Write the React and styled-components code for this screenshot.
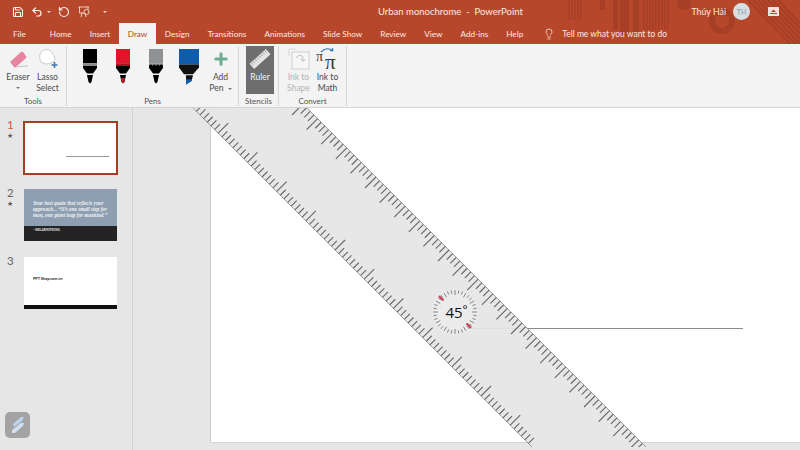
import React from 'react'
import styled, { createGlobalStyle } from 'styled-components'
import { Save, Undo2, RotateCcw, Lightbulb, Plus } from 'lucide-react'

const GlobalStyle = createGlobalStyle`
  html, body {
    margin: 0;
    padding: 0;
    width: 800px;
    height: 450px;
    overflow: hidden;
    background: #e6e6e6;
    font-family: Lato, "Open Sans", "Liberation Sans", sans-serif;
  }
`

const Window = styled.div`
  width: 800px;
  height: 450px;
  display: flex;
  flex-direction: column;
  overflow: hidden;
`

const Header = styled.header`
  position: relative;
  background: #b7472a;
  color: #fbe9e3;
  height: 44px;
  flex: none;
  overflow: hidden;
`

const HeaderArt = styled.svg`
  position: absolute;
  inset: 0;
`

const TitleBar = styled.div`
  position: relative;
  height: 23px;
  display: flex;
  align-items: center;
  font-size: 9.5px;
`

const QuickAccess = styled.div`
  width: 378px;
  flex: none;
  display: flex;
  align-items: center;
  padding-left: 12px;
  box-sizing: border-box;
  color: #fdf1ed;
`

const QatItem = styled.span`
  display: flex;
  align-items: center;
  margin-left: ${p => p.$gap || 0}px;
`

const Caret = styled.span`
  display: inline-block;
  width: 0;
  height: 0;
  border-left: 2px solid transparent;
  border-right: 2px solid transparent;
  border-top: 2px solid ${p => p.$color || '#f5d8cf'};
  margin: ${p => p.$margin || '0'};
`

const DocTitle = styled.div`
  white-space: pre;
`

const UserArea = styled.div`
  margin-left: auto;
  display: flex;
  align-items: center;
  padding-right: 21px;
  font-size: 8.8px;
`

const Avatar = styled.div`
  width: 17px;
  height: 17px;
  border-radius: 50%;
  background: #d8dfe3;
  color: #8b9aa3;
  font-size: 7px;
  display: flex;
  align-items: center;
  justify-content: center;
  margin: 0 18px 0 7px;
`

const TabBar = styled.nav`
  position: relative;
  height: 21px;
  display: flex;
  align-items: stretch;
  padding-left: 4px;
  font-size: 8.2px;
`

const Tab = styled.div`
  padding: 0 ${p => p.$pad || 9}px;
  margin-right: ${p => p.$after || 0}px;
  display: flex;
  align-items: center;
  white-space: nowrap;
  background: ${p => (p.$active ? '#f3f3f3' : 'transparent')};
  color: ${p => (p.$active ? '#b7472a' : 'inherit')};
`

const TellMe = styled.div`
  display: flex;
  align-items: center;
  gap: 7px;
  margin-left: 11px;
  white-space: nowrap;
  font-size: 8.5px;
`

const Ribbon = styled.section`
  height: 64px;
  flex: none;
  box-sizing: border-box;
  background: #f3f3f3;
  border-bottom: 1px solid #d4d4d4;
  display: flex;
  color: #4a4a4a;
  font-size: 8.5px;
  line-height: 11px;
`

const Group = styled.div`
  width: ${p => p.$width}px;
  box-sizing: border-box;
  flex: none;
  display: flex;
  flex-direction: column;
  margin: 2px 0 1px;
  border-right: 1px solid #d6d6d6;
`

const GroupBody = styled.div`
  flex: 1;
  display: flex;
  padding-left: ${p => p.$left || 0}px;
  min-height: 0;
`

const GroupLabel = styled.div`
  text-align: center;
  font-size: 8px;
  line-height: 10px;
  color: #555;
`

const Command = styled.div`
  width: ${p => p.$width}px;
  display: flex;
  flex-direction: column;
  align-items: center;
  text-align: center;
  color: ${p => (p.$disabled ? '#b5b5b5' : 'inherit')};
`

const IconSlot = styled.div`
  height: 26px;
  flex: none;
  display: flex;
  align-items: center;
  justify-content: center;
`

const PenSlot = styled.div`
  width: ${p => p.$width}px;
  padding-top: 3px;
  display: flex;
  justify-content: center;
  flex: none;
`

const RulerButton = styled.div`
  width: 28px;
  height: 48px;
  margin: 0 0 0 7px;
  background: #6e6e6e;
  color: #f4f4f4;
  display: flex;
  flex-direction: column;
  align-items: center;
`

const Main = styled.main`
  position: relative;
  flex: 1;
  display: flex;
  min-height: 0;
`

const SlidePane = styled.aside`
  width: 133px;
  flex: none;
  box-sizing: border-box;
  border-right: 1px solid #d2d2d2;
  background: #e6e6e6;
  display: flex;
  flex-direction: column;
  padding-top: 13px;
`

const SlideRow = styled.div`
  height: ${p => p.$height}px;
  display: flex;
  flex: none;
`

const SlideIndex = styled.div`
  width: 23px;
  padding-left: 7px;
  box-sizing: border-box;
  color: ${p => (p.$active ? '#c4593c' : '#666')};
  font-size: 11.5px;
  line-height: 12px;
  margin-top: -2px;
  flex: none;
`

const Star = styled.div`
  font-size: 7px;
  line-height: 8px;
  color: #555;
`

const Thumb = styled.div`
  width: ${p => (p.$active ? 95 : 93)}px;
  height: ${p => (p.$active ? 54 : 52)}px;
  box-sizing: border-box;
  margin-left: ${p => (p.$active ? 0 : 1)}px;
  background: #fff;
  border: ${p => (p.$active ? '2px solid #a53d24' : 'none')};
  display: flex;
  flex-direction: column;
  overflow: hidden;
`

const ThumbLine = styled.div`
  width: 43px;
  height: 1px;
  background: #999;
  margin: 33px 0 0 41px;
`

const QuoteBlock = styled.div`
  flex: 1;
  background: #8f9fb2;
  color: #eef0f3;
  font-family: "Liberation Serif", serif;
  font-style: italic;
  font-weight: 700;
  font-size: 5.2px;
  line-height: 5.8px;
  padding: 12px 5px 0 9px;
`

const QuoteFooter = styled.div`
  height: 15px;
  background: #242424;
  color: #eee;
  font-size: 2.8px;
  font-weight: 700;
  padding: 2px 0 0 9px;
  box-sizing: border-box;
`

const ThumbBody = styled.div`
  flex: 1;
  font-size: 3.8px;
  font-weight: 700;
  color: #222;
  padding: 19px 0 0 9px;
`

const ThumbFooter = styled.div`
  height: 4px;
  background: #111;
`

const ToggleButton = styled.div`
  width: 25px;
  height: 26px;
  border-radius: 5px;
  background: #a3a3a3;
  margin: auto 0 12px 5px;
  display: flex;
  align-items: center;
  justify-content: center;
`

const Canvas = styled.div`
  flex: 1;
  display: flex;
  padding: 0 0 8px 78px;
`

const Slide = styled.div`
  position: relative;
  flex: 1;
  background: #fff;
  box-shadow: -1px 0 0 #cdcdcd, 0 1px 0 #d4d4d4;
`

const InkLine = styled.div`
  position: absolute;
  left: 259px;
  right: 57px;
  top: 220px;
  height: 1px;
  background: #8c8c8c;
`

const RulerOverlay = styled.svg`
  position: absolute;
  left: 0;
  top: 0;
`

const range = (n, fn) => Array.from({ length: n }, (_, i) => fn(i))

function edgeTicks(offset, sign, every, longLen, shortLen) {
  const out = []
  let i = 0
  for (let y = 104; y < 447; y += 3.65, i++) {
    const x = y + offset
    const len = i % every === 0 ? longLen : shortLen
    out.push(<line key={i} x1={x} y1={y} x2={x + sign * len} y2={y - sign * len} />)
  }
  return out
}

function Ruler() {
  const cx = 455
  const cy = 312
  return (
    <RulerOverlay width="800" height="339" viewBox="0 108 800 339">
      <polygon points="193,108 307,108 646,447 532,447" fill="#e5e5e5" fillOpacity="0.93" />
      <g stroke="#666" strokeWidth="1.1">
        {edgeTicks(199, -1, 4, 11, 6)}
        {edgeTicks(85, 1, 8, 10, 5.5)}
      </g>
      <line x1="193" y1="108" x2="532" y2="447" stroke="#7d7d7d" strokeWidth="0.7" />
      <line x1="307" y1="108" x2="646" y2="447" stroke="#7d7d7d" strokeWidth="0.7" />
      <circle cx={cx} cy={cy} r="23" fill="#ebebeb" />
      <g stroke="#858585" strokeWidth="1">
        {range(36, i => {
          const a = (i * 10 * Math.PI) / 180
          const inner = i % 3 === 0 ? 17 : 18.5
          return (
            <line
              key={i}
              x1={cx + Math.cos(a) * inner}
              y1={cy + Math.sin(a) * inner}
              x2={cx + Math.cos(a) * 22}
              y2={cy + Math.sin(a) * 22}
            />
          )
        })}
      </g>
      <g stroke="#c8394a" strokeWidth="2">
        <line x1={cx - 11.5} y1={cy - 11.5} x2={cx - 16} y2={cy - 16} />
        <line x1={cx + 11.5} y1={cy + 11.5} x2={cx + 16} y2={cy + 16} />
      </g>
      <text x={cx - 1} y={cy + 6} textAnchor="middle" fontSize="15" fill="#111" fontFamily="Open Sans, sans-serif">
        45
      </text>
      <text x={cx + 7.5} y={cy + 2} fontSize="12" fill="#111" fontFamily="Open Sans, sans-serif">
        °
      </text>
    </RulerOverlay>
  )
}

function Pen({ width = 14, body, band, tip, scallop }) {
  const w = width
  const mid = w / 2
  return (
    <svg width={w} height="35" viewBox={`0 0 ${w} 37`} preserveAspectRatio="none">
      <rect x="0" y="0" width={w} height="15" fill={body} />
      <rect x="0" y="15" width={w} height="3" fill={band} />
      <path d={`M0 18 H${w} V20 L${mid + 3} 26 H${mid - 3} L0 20 Z`} fill="#000" />
      {scallop && (
        <path
          d={`M0 18 q2 -3 ${w / 4} 0 q2 -3 ${w / 4} 0 q2 -3 ${w / 4} 0 q2 -3 ${w / 4} 0 Z`}
          fill="#000"
        />
      )}
      <path d={`M${mid - 3} 27.5 H${mid + 3} L${mid + 1.5} 35 L${mid} 36.5 L${mid - 1.5} 35 Z`} fill="#000" />
      {tip && <path d={`M${mid - 2} 31 H${mid + 2} L${mid + 1} 36 H${mid - 1} Z`} fill={tip} />}
    </svg>
  )
}

function BluePen() {
  return (
    <svg width="20" height="36" viewBox="0 0 20 37" preserveAspectRatio="none">
      <rect x="0" y="0" width="20" height="16" fill="#0f5cab" />
      <path d="M0 16 H20 V19 L14 26 H5 L0 19 Z" fill="#111" />
      <path d="M7 27 H14 L12.5 33 L7 36.5 Z" fill="#111" />
      <path d="M7 31 H13 L12.5 33 L7 36.5 Z" fill="#0f5cab" />
    </svg>
  )
}

function EraserIcon() {
  return (
    <svg width="24" height="20" viewBox="0 0 24 20">
      <path d="M4 13 L15 3 Q16 2 17 3 L20 7 Q21 8 20 9 L10 18 Q9 19 8 18 Z" fill="#e884a0" />
      <path d="M11 18 Q16 17 22 17" stroke="#a9b9b6" strokeWidth="0.8" fill="none" />
    </svg>
  )
}

function LassoIcon() {
  return (
    <svg width="22" height="22" viewBox="0 0 22 22">
      <path
        d="M7 2 Q13 0 15 5 Q20 10 16 14 Q10 18 4 14 Q0 6 7 2 Z"
        fill="#fff"
        stroke="#c9c9c9"
        strokeWidth="0.9"
      />
      <path d="M17.5 14 V20 M14.5 17 H20.5" stroke="#3d78b5" strokeWidth="1.6" />
    </svg>
  )
}

function RulerGlyph() {
  return (
    <svg width="22" height="22" viewBox="0 0 22 22">
      <g transform="rotate(-42 11 11)">
        <rect x="0" y="7.5" width="22" height="7" fill="#e4e4e4" />
        <g stroke="#8b8b8b" strokeWidth="0.8">
          {range(8, i => (
            <line key={i} x1={2 + i * 2.6} y1="7.5" x2={2 + i * 2.6} y2="10.5" />
          ))}
        </g>
      </g>
    </svg>
  )
}

function InkShapeIcon() {
  return (
    <svg width="22" height="22" viewBox="0 0 22 22" fill="none">
      <rect x="4" y="4" width="17" height="17" stroke="#cfcfcf" fill="#f7f7f7" />
      <path d="M1 1 H8 M1 1 V8" stroke="#d8d8d8" />
      <path d="M8 10 Q11 5 15 9 L15 13 M12.5 11 L15 13.5 L17.5 11" stroke="#bdbdbd" />
    </svg>
  )
}

function InkMathIcon() {
  return (
    <svg width="24" height="30" viewBox="0 0 24 30">
      <path d="M5 8 Q11 2 17 7 M17 7 L14 6.5 M17 7 L16.5 4" stroke="#2f75b5" fill="none" strokeWidth="1.1" />
      <text x="0" y="17" fontSize="14" fill="#3a3a3a" fontFamily="Liberation Serif, serif">π</text>
      <text x="9" y="25" fontSize="21" fill="#3a3a3a" fontFamily="Liberation Serif, serif">π</text>
    </svg>
  )
}

function HeaderPattern() {
  return (
    <HeaderArt width="800" height="44" viewBox="0 0 800 44">
      <g fill="#a63f25">
        {range(5, i => <rect key={i} x={568 + i * 3} y="0" width="1.5" height="20" />)}
        <rect x="600" y="0" width="5" height="10" />
        <rect x="613" y="0" width="5" height="30" />
        <rect x="620" y="0" width="9" height="36" />
        <rect x="633" y="0" width="6" height="32" />
        {range(9, i => <rect key={i} x={643 + i * 3} y="0" width="1.5" height="30" />)}
        <circle cx="684" cy="3" r="7" />
      </g>
      <circle cx="722" cy="21" r="10" fill="none" stroke="#a63f25" strokeWidth="6" />
      <g stroke="#a63f25" strokeWidth="2">
        {range(7, i => <line key={i} x1={748 + i * 5} y1="0" x2={790 + i * 5} y2="44" />)}
      </g>
    </HeaderArt>
  )
}

function PresentIcon() {
  return (
    <svg width="13" height="12" viewBox="0 0 13 12" fill="none" stroke="#f5dcd4" strokeWidth="0.9">
      <path d="M0.5 1 H11" />
      <path d="M1.5 1 V7 H10 V1" />
      <circle cx="8.5" cy="6" r="2.6" fill="#b7472a" />
      <path d="M4 7 L3 11 M7 7 L8 11" />
    </svg>
  )
}

function DisplayOptions() {
  return (
    <svg width="11" height="9" viewBox="0 0 11 9">
      <rect x="0" y="0" width="11" height="9" rx="0.5" fill="#f6e2dc" />
      <path d="M3 5 L5.5 2.5 L8 5 Z" fill="#b7472a" />
      <rect x="2" y="6" width="7" height="1" fill="#b7472a" />
    </svg>
  )
}

function PenToggleGlyph() {
  return (
    <svg width="16" height="18" viewBox="0 0 16 18">
      <path d="M3 8 L11 1 H14 L12 5 L4 11 Z" fill="#bcd3ec" />
      <path d="M2 14 L11 7 H14 L13 10 L5 17 H2 Z" fill="#cfe0f3" />
    </svg>
  )
}

const tabs = [
  { label: 'File', after: 6 },
  { label: 'Home' },
  { label: 'Insert' },
  { label: 'Draw', active: true, pad: 8.5 },
  { label: 'Design' },
  { label: 'Transitions' },
  { label: 'Animations' },
  { label: 'Slide Show' },
  { label: 'Review' },
  { label: 'View' },
  { label: 'Add-ins' },
  { label: 'Help' },
]

export default function App() {
  return (
    <Window>
      <GlobalStyle />
      <Header>
        <HeaderPattern />
        <TitleBar>
          <QuickAccess>
            <QatItem><Save size={12} strokeWidth={2.2} /></QatItem>
            <QatItem $gap={7}><Undo2 size={12} strokeWidth={2.4} /></QatItem>
            <QatItem $gap={4}><Caret /></QatItem>
            <QatItem $gap={7}><RotateCcw size={12} strokeWidth={2.4} /></QatItem>
            <QatItem $gap={8}><PresentIcon /></QatItem>
            <QatItem $gap={12}><Caret /></QatItem>
          </QuickAccess>
          <DocTitle>Urban monochrome  -  PowerPoint</DocTitle>
          <UserArea>
            Thúy Hải
            <Avatar>TH</Avatar>
            <DisplayOptions />
          </UserArea>
        </TitleBar>
        <TabBar>
          {tabs.map(tab => (
            <Tab key={tab.label} $active={tab.active} $pad={tab.pad} $after={tab.after}>
              {tab.label}
            </Tab>
          ))}
          <TellMe>
            <Lightbulb size={12} strokeWidth={1.5} />
            Tell me what you want to do
          </TellMe>
        </TabBar>
      </Header>

      <Ribbon>
        <Group $width={67}>
          <GroupBody $left={3}>
            <Command $width={30}>
              <IconSlot><EraserIcon /></IconSlot>
              Eraser
              <Caret $color="#777" $margin="4px 0 0" />
            </Command>
            <Command $width={29}>
              <IconSlot><LassoIcon /></IconSlot>
              Lasso
              <br />
              Select
            </Command>
          </GroupBody>
          <GroupLabel>Tools</GroupLabel>
        </Group>

        <Group $width={172}>
          <GroupBody $left={6}>
            <PenSlot $width={33}>
              <Pen body="#000" band="#8a8a8a" />
            </PenSlot>
            <PenSlot $width={33}>
              <Pen body="#e0142b" band="#b01020" tip="#c8182c" />
            </PenSlot>
            <PenSlot $width={33}>
              <Pen body="#8e9292" band="#8e9292" scallop />
            </PenSlot>
            <PenSlot $width={34}>
              <BluePen />
            </PenSlot>
            <Command $width={29}>
              <IconSlot>
                <Plus size={18} color="#6faa93" strokeWidth={4} />
              </IconSlot>
              Add
              <span>
                Pen <Caret $color="#777" $margin="0 0 1px 2px" />
              </span>
            </Command>
          </GroupBody>
          <GroupLabel>Pens</GroupLabel>
        </Group>

        <Group $width={40}>
          <GroupBody>
            <RulerButton>
              <IconSlot><RulerGlyph /></IconSlot>
              Ruler
            </RulerButton>
          </GroupBody>
          <GroupLabel>Stencils</GroupLabel>
        </Group>

        <Group $width={68}>
          <GroupBody $left={5}>
            <Command $width={29} $disabled>
              <IconSlot><InkShapeIcon /></IconSlot>
              Ink to
              <br />
              Shape
            </Command>
            <Command $width={29}>
              <IconSlot><InkMathIcon /></IconSlot>
              Ink to
              <br />
              Math
            </Command>
          </GroupBody>
          <GroupLabel>Convert</GroupLabel>
        </Group>
      </Ribbon>

      <Main>
        <SlidePane>
          <SlideRow $height={68}>
            <SlideIndex $active>
              1<Star>★</Star>
            </SlideIndex>
            <Thumb $active>
              <ThumbLine />
            </Thumb>
          </SlideRow>
          <SlideRow $height={68}>
            <SlideIndex>
              2<Star>★</Star>
            </SlideIndex>
            <Thumb>
              <QuoteBlock>
                Your best quote that reflects your approach... “It’s one small step for man, one giant leap for mankind.”
              </QuoteBlock>
              <QuoteFooter>– NEIL ARMSTRONG</QuoteFooter>
            </Thumb>
          </SlideRow>
          <SlideRow $height={55}>
            <SlideIndex>3</SlideIndex>
            <Thumb>
              <ThumbBody>PPT Shop.com.vn</ThumbBody>
              <ThumbFooter />
            </Thumb>
          </SlideRow>
          <ToggleButton>
            <PenToggleGlyph />
          </ToggleButton>
        </SlidePane>
        <Canvas>
          <Slide>
            <InkLine />
          </Slide>
        </Canvas>
        <Ruler />
      </Main>
    </Window>
  )
}
